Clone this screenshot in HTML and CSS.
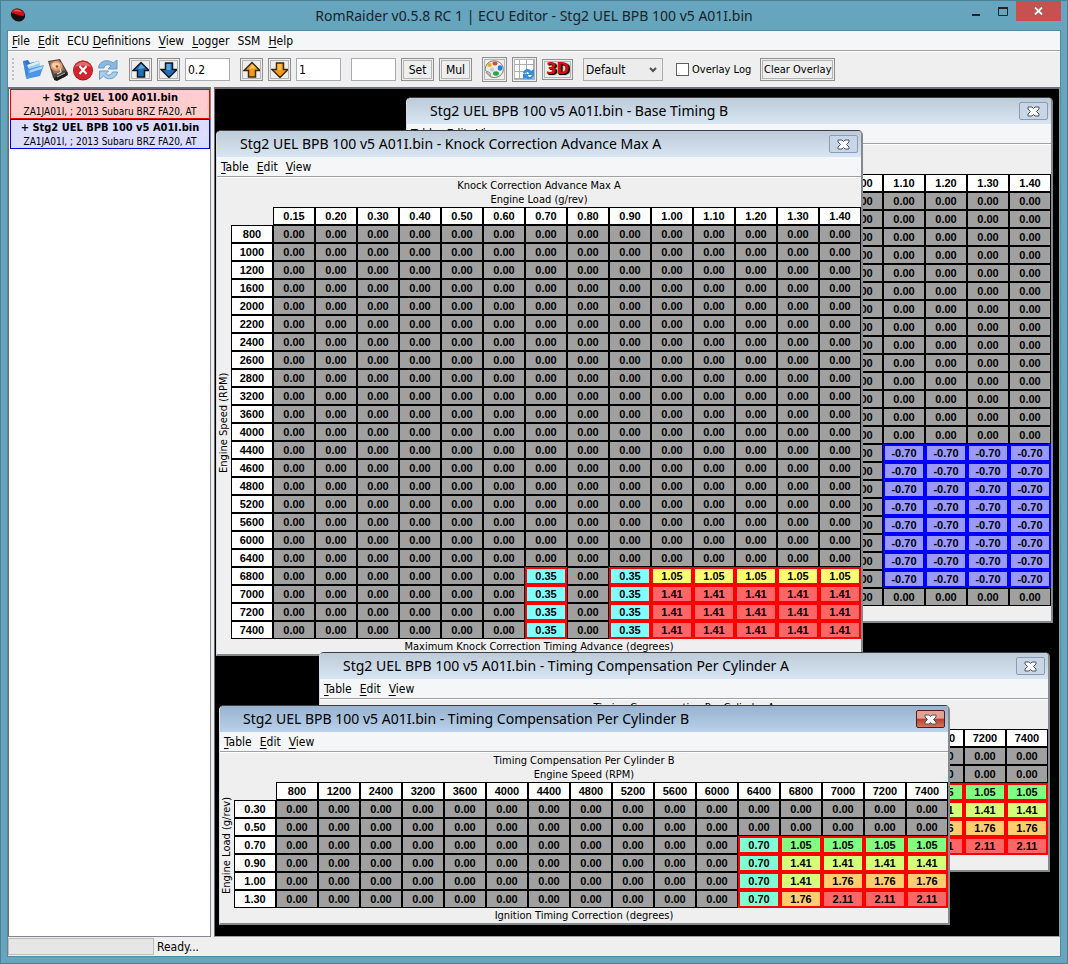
FILE: index.html
```html
<!DOCTYPE html>
<html lang="en">
<head>
<meta charset="utf-8">
<title>RomRaider ECU Editor</title>
<link rel="stylesheet" href="styles.css">
</head>
<body>
<div class="app">
  <header class="titlebar">
    <svg class="app-logo" width="16" height="16" viewBox="0 0 16 16" aria-hidden="true">
      <ellipse cx="8" cy="8" rx="7.3" ry="6.3" transform="rotate(25 8 8)" fill="#161011"/>
      <path d="M1.500 6C2 1 11 0 14 6c.5 2 0 3-.5 3C9 9 4 6 1.500 6z" fill="#c81318"/>
      <path d="M3 4.500c2-3 7-2 9 .5-3 0-6-1-9-.5z" fill="#ff5a55"/>
    </svg>
    <h1 class="app-title">RomRaider v0.5.8 RC 1 | ECU Editor - Stg2 UEL BPB 100 v5 A01I.bin</h1>
    <div class="win-controls">
      <button class="win-btn" aria-label="Minimize"><svg width="10" height="12" viewBox="0 0 10 12"><path d="M1 10h8" stroke="#222" stroke-width="2"/></svg></button>
      <button class="win-btn" aria-label="Maximize"><svg width="10" height="9" viewBox="0 0 10 9"><path d="M.5 1v7.500h9V1z" fill="none" stroke="#222"/><path d="M0 1h10" stroke="#222" stroke-width="2"/></svg></button>
      <button class="win-btn win-close" aria-label="Close"><svg width="9" height="8" viewBox="0 0 9 8"><path d="M1 .5l7 7M8 .5l-7 7" stroke="#fff" stroke-width="1.800"/></svg></button>
    </div>
  </header>

  <main class="frame">
    <nav class="menubar">
      <button><u>F</u>ile</button><button><u>E</u>dit</button><button>ECU <u>D</u>efinitions</button><button><u>V</u>iew</button><button><u>L</u>ogger</button><button>SSM</button><button><u>H</u>elp</button>
    </nav>

    <div class="toolbar">
      <span class="grip"></span>
      <div class="group plain">
        <button class="flat" aria-label="Open image"><svg width="24" height="24" viewBox="0 0 24 24">
          <path d="M2 3l5-1 2 3 9-2 1 12-13 6z" fill="#2f74cf"/>
          <path d="M6 7l11-4 2 2-1 9-10 4z" fill="#d9efff"/><path d="M8 9l11-4-1 9-9 3z" fill="#9bd0fa"/>
          <path d="M5 21l3-10 15-4-4 11z" fill="#4c93ea"/><path d="M9 12l13-4-1 3-13 4z" fill="#a9d4ff"/>
          <path d="M2 3l3 17 3-9-2-4z" fill="#4387dc"/></svg></button>
        <button class="flat" aria-label="Save image"><svg width="24" height="24" viewBox="0 0 24 24">
          <path d="M2 3l12-2 8 14-3 4-9 3-3-2z" fill="#4b4542"/><path d="M8 20l13-6 1 3-11 6-3-1z" fill="#1f1c1a"/>
          <path d="M3 4l10-2 6 10-11 4z" fill="#9a7058"/><ellipse cx="10.500" cy="8" rx="6" ry="5" fill="#e39a68"/><ellipse cx="10" cy="7.500" rx="4" ry="3" fill="#f8cda8"/>
          <circle cx="11" cy="8.500" r="1.300" fill="#9c4a23"/><path d="M14 10l1 4-4 2" fill="none" stroke="#d9d6d2" stroke-width="1.200"/><path d="M11 19l8-4" stroke="#b8b8b8"/></svg></button>
        <button class="flat" aria-label="Close image"><svg width="22" height="22" viewBox="0 0 22 22">
          <circle cx="11" cy="11.500" r="10" fill="#a81820"/><circle cx="11" cy="11" r="9.500" fill="#d2242d"/><path d="M3 8a9 9 0 0 1 16 0c-5-2-11-2-16 0z" fill="#e46a6e"/>
          <path d="M7.500 7l7 8M14.500 7l-7 8" stroke="#fff" stroke-width="2"/></svg></button>
        <button class="flat" aria-label="Refresh image"><svg width="22" height="22" viewBox="0 0 22 22">
          <path d="M1.500 9C2 1 12 0 16 4l4-3v9h-9l3-3c-2-2-6-2-7 2z" fill="#8ab8de" stroke="#6c9dca"/>
          <path d="M20.500 13c-1 7-10 9-14 4l-4 3.500V12h9l-3 3c3 2 6 1 7-2z" fill="#a9cdea" stroke="#6c9dca"/></svg></button>
      </div>
      <div class="group">
        <button class="tool" aria-label="Increment fine"><svg width="18" height="18" viewBox="0 0 18 18"><path d="M9 1.500l8 8h-4.500V16h-7V9.500H1z" fill="#1f6fb9" stroke="#101820" stroke-width="1.500"/><path d="M9 3l4 4-7 1z" fill="#5da4dd"/></svg></button>
        <button class="tool" aria-label="Decrement fine"><svg width="18" height="18" viewBox="0 0 18 18"><path d="M9 16.500l-8-8h4.500V2h7v6.500H17z" fill="#1f6fb9" stroke="#101820" stroke-width="1.500"/><path d="M6.500 3h4v6h-4z" fill="#5da4dd"/></svg></button>
        <input class="field" aria-label="Fine step" value="0.2">
      </div>
      <div class="group">
        <button class="tool" aria-label="Increment coarse"><svg width="18" height="18" viewBox="0 0 18 18"><path d="M9 1.500l8 8h-4.500V16h-7V9.500H1z" fill="#f29a13" stroke="#3a2a16" stroke-width="1.500"/><path d="M9 3l4 4-7 1z" fill="#ffc455"/></svg></button>
        <button class="tool" aria-label="Decrement coarse"><svg width="18" height="18" viewBox="0 0 18 18"><path d="M9 16.500l-8-8h4.500V2h7v6.500H17z" fill="#f29a13" stroke="#3a2a16" stroke-width="1.500"/><path d="M6.500 3h4v6h-4z" fill="#ffbc48"/></svg></button>
        <input class="field" aria-label="Coarse step" value="1">
      </div>
      <div class="group">
        <input class="field" aria-label="Set value" value="">
        <button class="tool text-btn">Set</button>
        <button class="tool text-btn">Mul</button>
      </div>
      <div class="group">
        <button class="tool large" aria-label="Cell colors"><svg width="21" height="21" viewBox="0 0 21 21">
          <path d="M2 7C4 0 17 0 19 8c2 8-6 12-12 10-2-1 0-3-1-4-2-2-5-1-5-4z" fill="#e9ece9" stroke="#77807c"/>
          <ellipse cx="5.500" cy="6" rx="2.200" ry="2" fill="#e9ad16"/><ellipse cx="11" cy="4.500" rx="2.500" ry="2" fill="#e84428"/><ellipse cx="16" cy="9" rx="2.300" ry="2.800" fill="#247dd8"/><ellipse cx="12" cy="14.500" rx="3" ry="2.200" fill="#25a845"/><circle cx="8" cy="10.500" r="2" fill="#c8c8c4"/><path d="M2 13l5 5" stroke="#999" stroke-width="1.500"/></svg></button>
        <button class="tool large" aria-label="Refresh compare"><svg width="21" height="21" viewBox="0 0 21 21">
          <path d="M0 0h21v21H0z" fill="#fff"/><path d="M0 5.500h21M0 12.500h21M0 19.500h21M5.500 0v21M12.500 0v21M19.500 0v21" stroke="#a9adb3"/>
          <path d="M9 14c1-5 7-5 8-2l3-2v6h-6l1-2c-2-2-3-1-4 1zM20 16c-1 5-7 5-8 3l-3 1v-5h6l-1 2c2 2 3 1 4-1z" fill="#338fe0"/></svg></button>
        <button class="tool three-d">3D</button>
      </div>
      <div class="group">
        <select class="scale" aria-label="Scale"><option>Default</option></select>
      </div>
      <div class="group overlay">
        <label class="check"><input type="checkbox">Overlay Log</label>
        <button class="tool text-btn">Clear Overlay</button>
      </div>
    </div>

    <div class="workspace">
      <aside class="rom-list">
        <div class="rom rom-red"><strong>+ Stg2 UEL 100 A01I.bin</strong><span>ZA1JA01I, ; 2013 Subaru BRZ FA20, AT</span></div>
        <div class="rom rom-blue"><strong>+ Stg2 UEL BPB 100 v5 A01I.bin</strong><span>ZA1JA01I, ; 2013 Subaru BRZ FA20, AT</span></div>
      </aside>
      <div class="desktop" id="desktop"></div>
    </div>

    <footer class="status"><div class="progress"></div><span>Ready...</span></footer>
  </main>
</div>
<script src="tables.js"></script>
</body>
</html>
```
FILE: styles.css
```css
* { box-sizing: border-box; }
body {
  margin: 0;
  font-family: "DejaVu Sans Condensed", "DejaVu Sans", sans-serif;
  font-size: 11px;
  color: #000;
}
button, input, select { font: inherit; color: inherit; }
button { padding: 0; border: 0; background: none; }
u { text-underline-offset: 2px; }

.app {
  display: flex;
  flex-direction: column;
  height: 100vh;
  padding: 0 6px 6px;
  background: #66a5bd;
  border: 1px solid #4d8094;
}

/* Application title bar */
.titlebar {
  display: grid;
  grid-template-columns: 1fr auto 1fr;
  flex: none;
  height: 29px;
}
.app-logo { margin: 6px 0 0 3px; }
.app-title {
  margin: 0;
  font: 14px/29px "Noto Sans", sans-serif;
  color: #17242b;
}
.win-controls { display: flex; justify-content: flex-end; align-items: flex-start; }
.win-btn { width: 27px; height: 20px; display: flex; align-items: center; justify-content: center; }
.win-close { width: 45px; background: #c75050; }

.frame {
  display: flex;
  flex-direction: column;
  flex: 1;
  min-height: 0;
  background: #efefef;
  border: 1px solid #4f8ca3;
}

/* Menus */
.menubar {
  display: flex;
  gap: 9px;
  flex: none;
  height: 20px;
  padding: 0 4px;
  background: #f5f6f8;
  border-bottom: 1px solid #a0a0a0;
  font-size: 12px;
}
.frame > .menubar { gap: 8px; }
.menubar button { white-space: nowrap; }

/* Toolbar */
.toolbar {
  display: flex;
  align-items: center;
  gap: 10px;
  flex: none;
  height: 36px;
  padding: 0 4px;
  border-top: 1px solid #fff;
}
.grip { width: 2px; height: 24px; margin-right: -3px; background: repeating-linear-gradient(#c0c0c0 0 2px, transparent 2px 4px); }
.group { display: flex; align-items: center; gap: 5px; }
.group.plain { gap: 1px; margin-right: -1px; }
.flat { display: flex; align-items: center; justify-content: center; width: 24px; height: 24px; }
.tool {
  display: flex;
  align-items: center;
  justify-content: center;
  width: 23px;
  height: 23px;
  border: 1px solid #8f8f8f;
  outline: 1px solid #b4b4b4;
  outline-offset: -3px;
  background: #eee;
}
.large { width: 25px; height: 25px; }
.text-btn { width: 33px; font-size: 12px; white-space: nowrap; }
.overlay .text-btn { width: 75px; font-size: 11px; }
.three-d {
  width: 31px;
  height: 21px;
  font: 900 15px/15px "DejaVu Sans", sans-serif;
  color: #d80d18;
  text-shadow: 1px 1px 0 #000, 2px 1px 1px #000;
}
.field {
  width: 45px;
  height: 23px;
  padding: 0 2px;
  border: 1px solid #a9abb3;
  background: #fff;
  font-size: 12px;
}
.scale {
  appearance: none;
  width: 80px;
  height: 23px;
  padding: 0 2px;
  border: 1px solid #acacac;
  border-radius: 0;
  font-size: 12px;
  background: #ececec url("data:image/svg+xml,%3Csvg xmlns='http://www.w3.org/2000/svg' width='8' height='6'%3E%3Cpath d='M1 1l3 3 3-3' fill='none' stroke='%23505050' stroke-width='2'/%3E%3C/svg%3E") no-repeat right 5px center;
}
.overlay { margin-left: 3px; gap: 9px; }
.check { display: flex; align-items: center; gap: 3px; white-space: nowrap; }
.check input { appearance: none; width: 13px; height: 13px; margin: 0; border: 1px solid #606060; background: #fff; }

/* ROM list and desktop */
.workspace { display: flex; gap: 3px; flex: 1; min-height: 0; }
.rom-list {
  flex: none;
  width: 203px;
  background: #fff;
  border: 1px solid #82868f;
  border-top: 2px solid #6d6f75;
  border-left-color: #6d6f75;
}
.rom {
  display: flex;
  flex-direction: column;
  align-items: center;
  height: 30px;
  margin-left: 1px;
  border: 1px solid;
  line-height: 15px;
  white-space: nowrap;
}
.rom span { font-size: 10px; line-height: 14px; }
.rom-red { background: #ffcdcd; border-color: #f00000; }
.rom-blue { background: #dcdcff; border-color: #0000d8; }
.desktop {
  position: relative;
  flex: 1;
  min-width: 0;
  overflow: hidden;
  background: #000;
  border: 1px solid #82868f;
  border-width: 2px 1px 1px 1px;
  border-color: #6d6f75 #a0a0a0 #a0a0a0 #6d6f75;
}

/* Table windows on the desktop */
.win {
  position: absolute;
  background: #efefef;
  border: 1px solid #8a8d92;
  border-top-color: #3c4046;
  border-left-color: #d8dee6;
  border-right: 2px solid #85888c;
  border-bottom: 2px solid #85888c;
  border-radius: 5px 5px 0 0;
}
.win-knock { left: 1px; top: 41px; }
.win-base { left: 191px; top: 8px; }
.win-cyl-a { left: 104px; top: 563px; }
.win-cyl-b { left: 4px; top: 616px; }
.win-title {
  display: flex;
  align-items: center;
  justify-content: space-between;
  height: 26px;
  padding: 0 3px 0 23px;
  border-radius: 4px 4px 0 0;
  background: linear-gradient(#bdcbd9, #d8e5f2);
}
.win-title h2 { margin: 0; font: 14px/26px "Noto Sans", sans-serif; white-space: nowrap; }
.win-x {
  display: flex;
  align-items: center;
  justify-content: center;
  width: 29px;
  height: 18px;
  border: 1px solid #8a9bb5;
  border-radius: 2px;
  background: #c8d6e5;
}
.active .win-title { background: linear-gradient(#98b3d0, #b9d1ea); }
.active .win-x { border-color: #571a1a; background: linear-gradient(#e4a194 45%, #b6412a 50%, #d4765c); }
.win .menubar { gap: 8px; }
.win-body { display: grid; grid-template-columns: 14px auto; border-top: 1px solid #fff; }
.caption { grid-column: 1 / -1; text-align: center; line-height: 14px; height: 14px; white-space: nowrap; overflow: hidden; }
.head { margin-top: 1px; }
.unit { height: 15px; line-height: 16px; }
.side {
  display: flex;
  align-items: center;
  justify-content: center;
  writing-mode: vertical-rl;
  transform: rotate(180deg);
  line-height: 14px;
  white-space: nowrap;
}
.map {
  table-layout: fixed;
  width: min-content;
  border-collapse: separate;
  border-spacing: 0;
  font: bold 11px/14px "Liberation Sans", Arial, sans-serif;
  text-align: center;
}
.map th, .map td { width: 42px; height: 18px; padding: 0; border: 1px solid #000; background: #a0a0a0; }
.map th { background: #fff; }
.map .corner { border: 0; background: none; }
.map .up { border: 2px solid #f00; }
.map .down { border: 2px solid #00f; background: #9999ff; }
.map .cyan { background: #80ffff; }
.map .aqua { background: #80ffd4; }
.map .green { background: #80ff80; }
.map .lime { background: #d4ff78; }
.map .yellow { background: #ffff73; }
.map .orange { background: #ffcc70; }
.map .red { background: #ff6666; }

/* Status bar */
.status { display: flex; align-items: center; gap: 3px; flex: none; height: 19px; font-size: 12px; }
.progress { width: 146px; height: 17px; background: #e6e6e6; border: 1px solid #bcbcbc; }
```
FILE: tables.js
```js
const loads = ["0.15","0.20","0.30","0.40","0.50","0.60","0.70","0.80","0.90","1.00","1.10","1.20","1.30","1.40"];
const speeds = [800,1000,1200,1600,2000,2200,2400,2600,2800,3200,3600,4000,4400,4600,4800,5200,5600,6000,6400,6800,7000,7200,7400];
const cylSpeeds = [800,1200,2400,3200,3600,4000,4400,4800,5200,5600,6000,6400,6800,7000,7200,7400];
const cylLoads = ["0.30","0.50","0.70","0.90","1.00","1.30"];
const prefix = "Stg2 UEL BPB 100 v5 A01I.bin - ";

function knockCell(r, c) {
  if (r < 19 || c < 6 || c === 7) return ["0.00", ""];
  if (c < 9) return ["0.35", "up cyan"];
  return r === 19 ? ["1.05", "up yellow"] : ["1.41", "up red"];
}
function baseCell(r, c) {
  return r > 13 && r < 22 && c > 9 ? ["-0.70", "down"] : ["0.00", ""];
}
function cylCell(r, c) {
  if (r < 2 || c < 11) return ["0.00", ""];
  if (c === 11) return ["0.70", "up aqua"];
  if (r === 2) return ["1.05", "up green"];
  if (r === 3 || (r === 4 && c === 12)) return ["1.41", "up lime"];
  if (r === 4 || c === 12) return ["1.76", "up orange"];
  return ["2.11", "up red"];
}

const windows = [
  { cls: "win-base", name: "Base Timing B", x: "Engine Load (g/rev)", y: "Engine Speed (RPM)", unit: "Base Ignition Timing (degrees)", cols: loads, rows: speeds, cell: baseCell },
  { cls: "win-knock", name: "Knock Correction Advance Max A", x: "Engine Load (g/rev)", y: "Engine Speed (RPM)", unit: "Maximum Knock Correction Timing Advance (degrees)", cols: loads, rows: speeds, cell: knockCell },
  { cls: "win-cyl-a", name: "Timing Compensation Per Cylinder A", x: "Engine Speed (RPM)", y: "Engine Load (g/rev)", unit: "Ignition Timing Correction (degrees)", cols: cylSpeeds, rows: cylLoads, cell: cylCell },
  { cls: "win-cyl-b active", name: "Timing Compensation Per Cylinder B", x: "Engine Speed (RPM)", y: "Engine Load (g/rev)", unit: "Ignition Timing Correction (degrees)", cols: cylSpeeds, rows: cylLoads, cell: cylCell }
];

const closeIcon = '<svg width="13" height="11" viewBox="0 0 13 11"><path d="M1 1h4l1.500 1.500L8 1h4v2L9.500 5.500 12 8v2H8L6.500 8.500 5 10H1V8l2.500-2.500L1 3z" fill="#fff" stroke="#4b5468"/></svg>';

document.getElementById("desktop").innerHTML = windows.map(w => {
  const head = w.cols.map(c => `<th scope="col">${c}</th>`).join("");
  const body = w.rows.map((label, r) => {
    const cells = w.cols.map((_, c) => {
      const [value, cls] = w.cell(r, c);
      return `<td class="${cls}">${value}</td>`;
    }).join("");
    return `<tr><th scope="row">${label}</th>${cells}</tr>`;
  }).join("");
  return `<section class="win ${w.cls}">
    <header class="win-title"><h2>${prefix}${w.name}</h2><button class="win-x" aria-label="Close">${closeIcon}</button></header>
    <nav class="menubar"><button><u>T</u>able</button><button><u>E</u>dit</button><button><u>V</u>iew</button></nav>
    <div class="win-body">
      <div class="caption head">${w.name}</div>
      <div class="caption">${w.x}</div>
      <div class="side">${w.y}</div>
      <table class="map"><thead><tr><td class="corner"></td>${head}</tr></thead><tbody>${body}</tbody></table>
      <div class="caption unit">${w.unit}</div>
    </div>
  </section>`;
}).join("");
```
